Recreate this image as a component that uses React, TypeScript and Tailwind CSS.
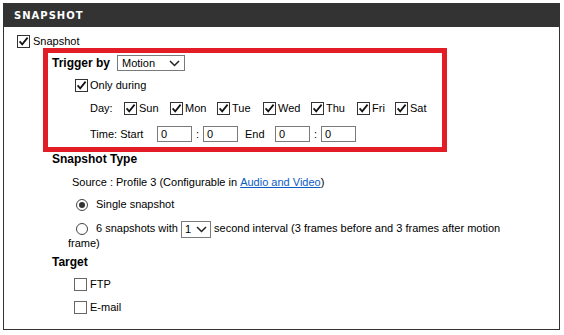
import React from "react"

function Check({ on = true }: { on?: boolean }) {
  return (
    <span
      className={`inline-flex h-[13px] w-[13px] shrink-0 items-center justify-center border bg-white ${
        on ? "border-[#333]" : "border-[#666]"
      }`}
    >
      {on && (
        <svg width="11" height="11" viewBox="0 0 11 11">
          <path d="M1.6 5.4 L4.2 8.4 L9.6 1.6" fill="none" stroke="#111" strokeWidth="1.7" />
        </svg>
      )}
    </span>
  )
}

function Radio({ on = false }: { on?: boolean }) {
  return (
    <span className="inline-flex h-[12px] w-[12px] shrink-0 items-center justify-center rounded-full border border-[#444] bg-white align-middle">
      {on && <span className="h-[6px] w-[6px] rounded-full bg-[#333]" />}
    </span>
  )
}

function Chevron() {
  return (
    <svg width="11" height="7" viewBox="0 0 11 7">
      <path d="M1 1 L5.5 5.5 L10 1" fill="none" stroke="#222" strokeWidth="1.5" />
    </svg>
  )
}

function TimeBox() {
  return (
    <span className="flex h-[16px] w-[35px] items-center border border-[#7a7a7a] bg-white pl-[3px] leading-none">
      0
    </span>
  )
}

const days = [
  { label: "Sun", w: "w-[46px]" },
  { label: "Mon", w: "w-[47px]" },
  { label: "Tue", w: "w-[46px]" },
  { label: "Wed", w: "w-[48px]" },
  { label: "Thu", w: "w-[46px]" },
  { label: "Fri", w: "w-[38px]" },
  { label: "Sat", w: "w-[40px]" },
]

export default function App() {
  return (
    <div className="min-h-[335px] bg-white pl-[3px] pt-[3px] font-['Liberation_Sans',Arial,sans-serif] text-[11px] text-black">
      <div className="relative h-[327px] w-[557px] border border-[#333]">
        <div className="flex h-[23px] items-center bg-[#333] pl-[10px] font-['DejaVu_Sans',sans-serif] text-[10px] font-bold tracking-[1px] text-white">
          SNAPSHOT
        </div>

        <div className="flex flex-col pt-[4px]">
          {/* Snapshot enable */}
          <div className="flex h-[21px] items-center gap-[3px] pl-[13px]">
            <Check />
            <span>Snapshot</span>
          </div>

          {/* Trigger by */}
          <div className="flex h-[22px] items-center pl-[48px]">
            <span className="w-[65px] text-[12px] font-bold">Trigger by</span>
            <span className="flex h-[16px] w-[68px] items-center justify-between border border-[#7a7a7a] bg-white pl-[4px] pr-[4px]">
              <span>Motion</span>
              <Chevron />
            </span>
          </div>

          {/* Only during */}
          <div className="flex h-[22px] items-center gap-[2px] pl-[71px]">
            <Check />
            <span>Only during</span>
          </div>

          {/* Days */}
          <div className="flex h-[24px] items-center pl-[86px]">
            <span className="w-[34px]">Day:</span>
            {days.map((d) => (
              <span key={d.label} className={`flex items-center gap-[2px] ${d.w}`}>
                <Check />
                <span>{d.label}</span>
              </span>
            ))}
          </div>

          {/* Time */}
          <div className="flex h-[28px] items-center pl-[86px]">
            <span className="w-[67px]">Time: Start</span>
            <TimeBox />
            <span className="w-[11px] text-center">:</span>
            <TimeBox />
            <span className="w-[37px] pl-[7px]">End</span>
            <TimeBox />
            <span className="w-[11px] text-center">:</span>
            <TimeBox />
          </div>

          {/* Snapshot type */}
          <div className="flex h-[22px] items-center pl-[48px] text-[12px] font-bold">
            Snapshot Type
          </div>
          <div className="flex h-[24px] items-center pl-[68px]">
            Source : Profile 3 (Configurable in&nbsp;
            <a href="#" className="text-[#0b5cc4] underline">
              Audio and Video
            </a>
            )
          </div>
          <div className="flex h-[21px] items-center pl-[72px]">
            <Radio on />
            <span className="ml-[8px]">Single snapshot</span>
          </div>
          <p className="mt-[6px] w-[510px] pl-[64px] leading-[15px]">
            <span className="ml-[8px] mr-[8px] inline-flex align-middle">
              <Radio />
            </span>
            6 snapshots with{" "}
            <span className="-my-[2px] inline-flex h-[17px] w-[30px] items-center justify-between border border-[#7a7a7a] bg-white pl-[3px] pr-[3px] align-middle leading-none">
              <span>1</span>
              <Chevron />
            </span>{" "}
            second interval (3 frames before and 3 frames after motion frame)
          </p>

          {/* Target */}
          <div className="flex h-[22px] items-center pl-[48px] text-[12px] font-bold">
            Target
          </div>
          <div className="flex h-[23px] items-center gap-[3px] pl-[70px]">
            <Check on={false} />
            <span>FTP</span>
          </div>
          <div className="flex h-[22px] items-center gap-[3px] pl-[70px]">
            <Check on={false} />
            <span>E-mail</span>
          </div>
        </div>

        {/* red annotation frame */}
        <div className="pointer-events-none absolute left-[39px] top-[44px] h-[104px] w-[404px] border-[5px] border-[#e31d25]" />
      </div>
    </div>
  )
}
